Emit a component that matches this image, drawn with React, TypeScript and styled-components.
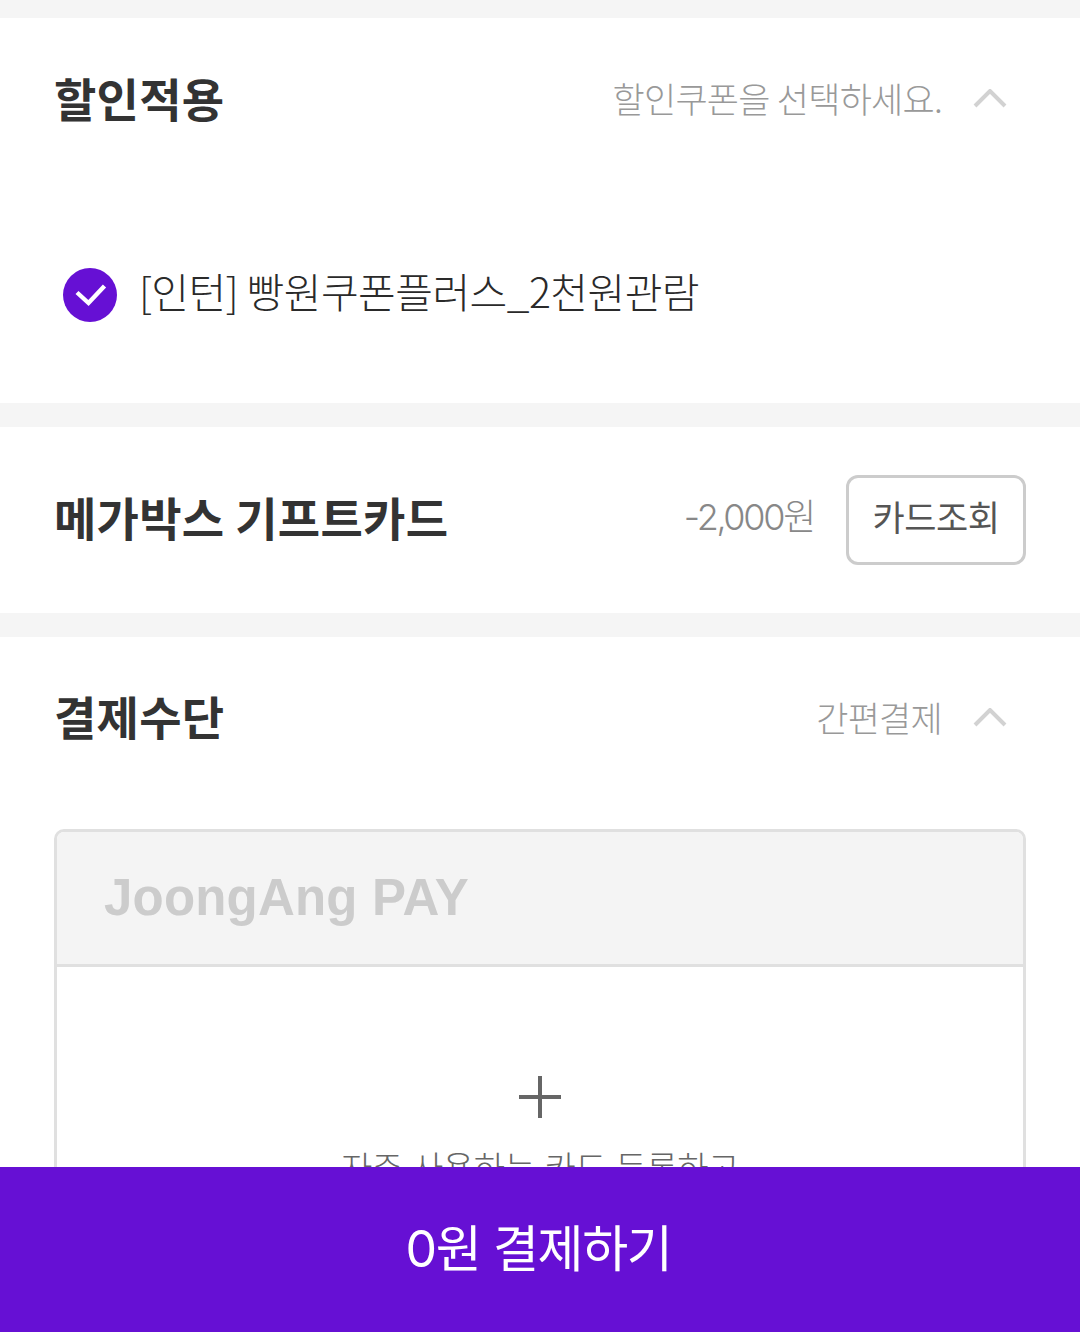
import React from "react";
import styled, { createGlobalStyle } from "styled-components";

const GlobalStyle = createGlobalStyle`
    html, body {
        margin: 0;
        padding: 0;
        height: 100%;
        overflow: hidden;
        background: #f5f5f5;
        font-family: "Noto Sans CJK KR", sans-serif;
    }
`

const Page = styled.div`
    height: 1332px;
    overflow: hidden;
    padding-top: 18px;
    box-sizing: border-box;
    display: flex;
    flex-direction: column;
    gap: 24px;
`

const Section = styled.section<{ $height?: number }>`
    background: #fff;
    padding: 0 55px;
    flex: none;
    ${({ $height }) => $height && `height: ${$height}px;`}
`

const Header = styled.div<{ $height: number }>`
    height: ${({ $height }) => $height}px;
    display: flex;
    align-items: center;
    justify-content: space-between;
`

const Title = styled.h2<{ $lift: number }>`
    margin: 0 0 0 -1px;
    padding-bottom: ${({ $lift }) => $lift}px;
    font-size: 46px;
    line-height: 60px;
    font-weight: 700;
    letter-spacing: 0.3px;
    color: #333;
`

const Side = styled.div`
    display: flex;
    align-items: center;
`

const Hint = styled.span`
    font-size: 35px;
    line-height: 50px;
    font-weight: 300;
    letter-spacing: -0.75px;
    color: #999;
`

const Chevron = styled.svg`
    width: 34px;
    height: 20px;
    margin: 2px 18px 0 31px;
    fill: none;
    stroke: #d2d2d2;
    stroke-width: 4;
`

const CouponRow = styled.div`
    display: flex;
    align-items: center;
    gap: 22px;
    padding: 85px 0 0 8px;
`

const CheckIcon = styled.svg`
    width: 54px;
    height: 54px;
    flex: none;
`

const CouponName = styled.span`
    padding-bottom: 10px;
    font-size: 41px;
    line-height: 54px;
    font-weight: 300;
    letter-spacing: -0.55px;
    color: #2a2a2a;
`

const Amount = styled.span`
    padding-bottom: 6px;
    font-family: Inter, "Noto Sans CJK KR", sans-serif;
    font-size: 36px;
    line-height: 50px;
    font-weight: 300;
    letter-spacing: -2.3px;
    color: #888;
`

const CardButton = styled.button`
    width: 180px;
    height: 90px;
    margin: 0 -1px 0 32px;
    box-sizing: border-box;
    background: #fff;
    border: 3px solid #ccc;
    border-radius: 12px;
    padding: 0 0 8px;
    font-family: inherit;
    font-size: 35px;
    font-weight: 400;
    letter-spacing: -0.4px;
    color: #555;
`

const PayBox = styled.div`
    margin: 32px -1px 0;
    border: 3px solid #e0e0e0;
    border-radius: 10px;
    overflow: hidden;
`

const PayHead = styled.div`
    height: 135px;
    box-sizing: border-box;
    background: #f4f4f4;
    border-bottom: 3px solid #e0e0e0;
    padding: 0 0 2px 47px;
    display: flex;
    align-items: center;
`

const PayLogo = styled.span`
    font-family: "Liberation Sans", Arial, sans-serif;
    font-size: 51px;
    font-weight: 700;
    letter-spacing: 0.2px;
    color: #ccc;
    filter: blur(0.4px);
`

const PayBody = styled.div`
    display: flex;
    flex-direction: column;
    align-items: center;
    padding-top: 109px;
    height: 400px;
`

const PlusIcon = styled.svg`
    width: 42px;
    height: 42px;
    fill: none;
    stroke: #666;
    stroke-width: 4;
`

const PayText = styled.p`
    margin: 26px 0 0;
    font-family: Inter, "Noto Sans CJK KR", sans-serif;
    font-size: 34px;
    line-height: 50px;
    font-weight: 300;
    letter-spacing: -0.4px;
    color: #666;
`

const PayBar = styled.button`
    position: fixed;
    left: 0;
    right: 0;
    bottom: 0;
    height: 165px;
    border: 0;
    padding: 0 3px 10px 0;
    background: #6610d4;
    color: #fff;
    font-family: Inter, "Noto Sans CJK KR", sans-serif;
    font-size: 50px;
    font-weight: 400;
    letter-spacing: -1.4px;
`

function UpChevron() {
    return (
        <Chevron viewBox="0 0 34 20">
            <path d="M2 17 L17 2 L32 17" />
        </Chevron>
    )
}

export default function App() {
    return (
        <React.Fragment>
            <GlobalStyle />
            <Page>
                <Section $height={385}>
                    <Header $height={160}>
                        <Title $lift={2}>할인적용</Title>
                        <Side>
                            <Hint>할인쿠폰을 선택하세요.</Hint>
                            <UpChevron />
                        </Side>
                    </Header>
                    <CouponRow>
                        <CheckIcon viewBox="0 0 54 54">
                            <circle cx="27" cy="27" r="27" fill="#6610d4" />
                            <path d="M14 24.5 L25.5 35 L41.5 18" fill="none" stroke="#fff" strokeWidth="4.4" />
                        </CheckIcon>
                        <CouponName>[인턴] 빵원쿠폰플러스_2천원관람</CouponName>
                    </CouponRow>
                </Section>
                <Section $height={186}>
                    <Header $height={185}>
                        <Title $lift={8}>메가박스 기프트카드</Title>
                        <Side>
                            <Amount>-2,000원</Amount>
                            <CardButton>카드조회</CardButton>
                        </Side>
                    </Header>
                </Section>
                <Section>
                    <Header $height={160}>
                        <Title $lift={4}>결제수단</Title>
                        <Side>
                            <Hint>간편결제</Hint>
                            <UpChevron />
                        </Side>
                    </Header>
                    <PayBox>
                        <PayHead>
                            <PayLogo>JoongAng PAY</PayLogo>
                        </PayHead>
                        <PayBody>
                            <PlusIcon viewBox="0 0 42 42">
                                <path d="M21 0 V42 M0 21 H42" />
                            </PlusIcon>
                            <PayText>자주 사용하는 카드 등록하고</PayText>
                        </PayBody>
                    </PayBox>
                </Section>
            </Page>
            <PayBar>0원 결제하기</PayBar>
        </React.Fragment>
    )
}
